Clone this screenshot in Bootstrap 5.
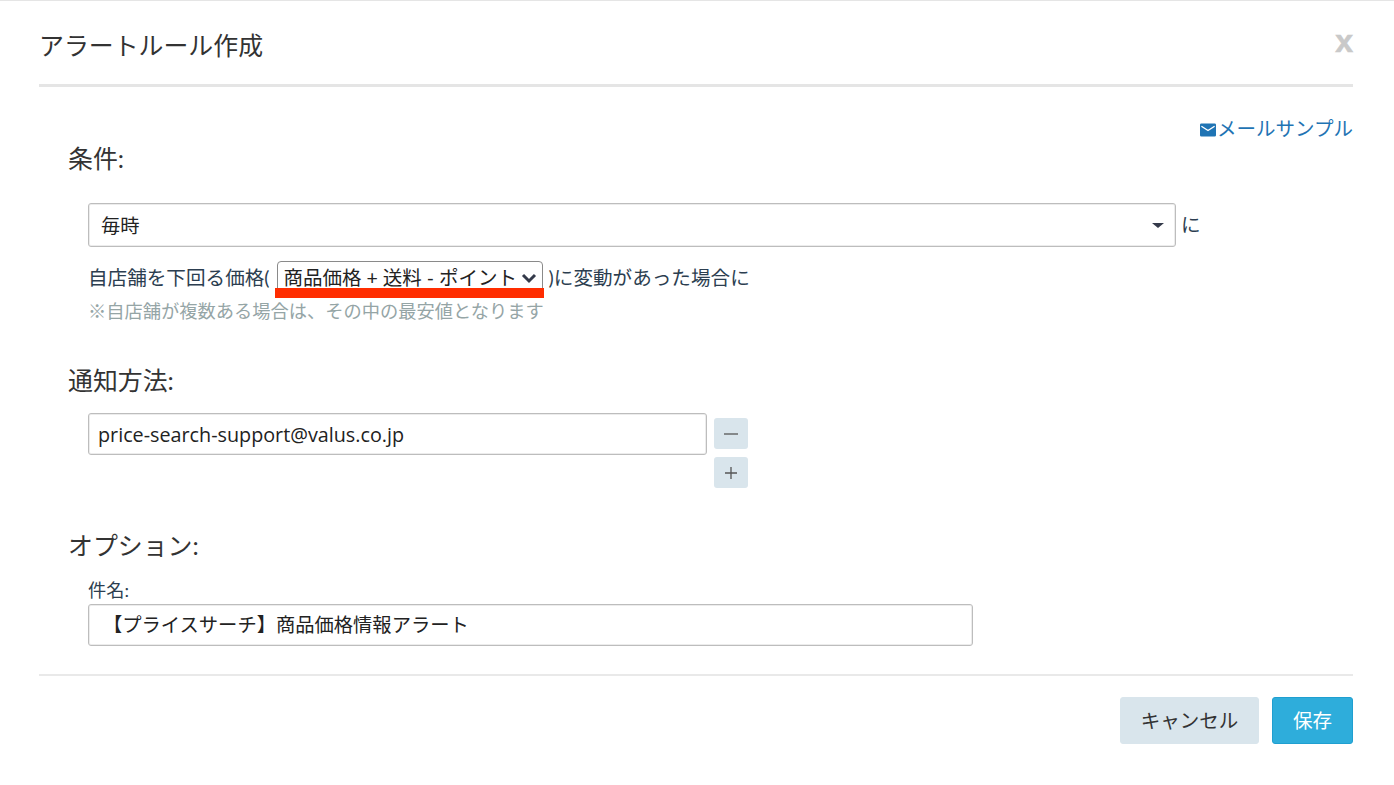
<!DOCTYPE html>
<html lang="ja">
<head>
<meta charset="utf-8">
<title>アラートルール作成</title>
<link href="https://cdn.jsdelivr.net/npm/bootstrap@5.3.0/dist/css/bootstrap.min.css" rel="stylesheet">
<style>
html,body{height:785px;overflow:hidden;background:#fff;}
body{font-family:Lato,"Noto Sans CJK JP",sans-serif;color:#2c3e50;font-size:19.6px;line-height:28px;}
.sheet{border-top:1px solid #e5e5e5;padding:0 41px 0 39px;height:785px;}
.sheet-head{height:86px;border-bottom:3px solid #e5e5e5;}
.sheet-title{font-size:24.9px;font-weight:400;color:#333;margin:0;line-height:32px;padding:28px 0 0 0;}
.close-x{font-family:"Liberation Sans",sans-serif;font-weight:700;font-size:32px;color:#c9c9c9;line-height:32px;margin-top:24px;border:0;background:none;padding:0;-webkit-text-stroke:.6px #c9c9c9;}
.sheet-body{height:587px;padding:28px 0 0 29px;position:relative;}
.sample-link{color:#1f74b4;text-decoration:none;font-size:19.5px;line-height:28px;}
.sample-link svg{width:16px;height:14px;vertical-align:-1px;margin-right:1px;}
.sect-title{font-size:24.9px;font-weight:400;color:#333;line-height:32px;margin:0;}
.title-cond{margin-top:-1px;}
.title-notify{margin-top:40px;}
.title-opts{margin-top:41px;}
.indent{padding-left:20px;}
.cond-row{margin-top:29px;}
.ctl-box{border:1px solid #bdbdbd;border-radius:3px;box-shadow:inset 0 0 0 1px #ececec;color:#222;font-size:19.3px;height:42px;background-color:#fff;}
.every-sel{height:44px;width:1088px;padding:2px 30px 0 12px;line-height:40px;background-position:right 10px center;background-size:14px 14px;background-image:url("data:image/svg+xml,%3csvg xmlns='http://www.w3.org/2000/svg' viewBox='0 0 14 14'%3e%3cpath fill='%23343a4a' d='M1 5h12L7 10z'/%3e%3c/svg%3e");}
.cond-suffix{margin-left:1px;}
.price-row{margin-top:14px;height:32px;line-height:34px;}
.inline-sel{width:266px;height:33px;margin:0 6px 0 7px;padding:1px 24px 0 6px;font-size:19.5px;line-height:30px;color:#222;border:1px solid #8a8a8a;border-radius:4px;background-size:16px 16px;background-position:right 5px center;background-image:url("data:image/svg+xml,%3csvg xmlns='http://www.w3.org/2000/svg' viewBox='0 0 16 16'%3e%3cpath fill='none' stroke='%23343a4a' stroke-width='3' d='M2 5l6 6 6-6'/%3e%3c/svg%3e");}
.red-mark{position:absolute;left:236px;top:201px;width:269px;height:10px;background:#ff2d00;}
.hint{color:#95a5a6;font-size:18.25px;line-height:26px;margin-top:5px;}
.mail-wrap{margin-top:17px;}
.mail-input{width:619px;padding:0 9px;font-family:"Open Sans",sans-serif;font-size:19.75px;}
.step-col{margin-left:7px;padding-top:5px;gap:8px;}
.step-btn{width:34px;height:31px;background:#d9e5ec;border:0;border-radius:3px;padding:0;}
.step-btn svg{width:14px;height:14px;display:block;margin:auto;}
.opt-label{font-size:18.2px;line-height:27px;margin-top:16px;}
.subject{width:885px;padding:0 14px 2px;}
.sheet-foot{border-top:2px solid #e9e9e9;padding-top:21px;gap:13px;}
.btn-cancel{width:139px;height:47px;background:#d9e5ec;border:1px solid #d9e5ec;color:#333;font-size:19.5px;border-radius:3px;}
.btn-save{width:81px;height:47px;background:#2eaddb;border:1px solid #1f9fd0;color:#fff;font-size:19.5px;border-radius:3px;}
</style>
</head>
<body>
<div class="sheet">
  <div class="sheet-head d-flex justify-content-between align-items-start">
    <h1 class="sheet-title">アラートルール作成</h1>
    <button class="close-x" type="button">x</button>
  </div>
  <div class="sheet-body">
    <div class="d-flex justify-content-end">
      <a href="#" class="sample-link"><svg viewBox="0 0 17 14"><path fill="#1f74b4" d="M1.5 0h14A1.5 1.5 0 0 1 17 1.5v11a1.5 1.5 0 0 1-1.5 1.5h-14A1.5 1.5 0 0 1 0 12.500v-11A1.5 1.5 0 0 1 1.500 0z"/><path fill="none" stroke="#fff" stroke-width="1.500" d="M1.500 3l7 4.500 7-4.500"/></svg>メールサンプル</a>
    </div>
    <h2 class="sect-title title-cond">条件:</h2>
    <div class="indent">
      <div class="cond-row d-flex align-items-center gap-1">
        <select class="form-select ctl-box every-sel"><option>毎時</option></select>
        <span class="cond-suffix">に</span>
      </div>
      <div class="price-row d-flex align-items-start">
        <span>自店舗を下回る価格(</span>
        <select class="form-select inline-sel"><option>商品価格 + 送料 - ポイント</option></select>
        <span>)に変動があった場合に</span>
      </div>
      <div class="hint">※自店舗が複数ある場合は、その中の最安値となります</div>
    </div>
    <div class="red-mark"></div>
    <h2 class="sect-title title-notify">通知方法:</h2>
    <div class="indent mail-wrap d-flex align-items-start">
      <input class="form-control ctl-box mail-input" type="text" value="price-search-support@valus.co.jp">
      <div class="step-col d-flex flex-column">
        <button class="step-btn" type="button" aria-label="削除"><svg viewBox="0 0 14 14"><path stroke="#555" stroke-width="1.300" d="M0 7h14"/></svg></button>
        <button class="step-btn" type="button" aria-label="追加"><svg viewBox="0 0 14 14"><path stroke="#555" stroke-width="1.300" fill="none" d="M1 7h12M7 1v12"/></svg></button>
      </div>
    </div>
    <h2 class="sect-title title-opts">オプション:</h2>
    <div class="indent">
      <div class="opt-label">件名:</div>
      <input class="form-control ctl-box subject" type="text" value="【プライスサーチ】商品価格情報アラート">
    </div>
  </div>
  <div class="sheet-foot d-flex justify-content-end">
    <button class="btn btn-cancel p-0" type="button">キャンセル</button>
    <button class="btn btn-save p-0" type="button">保存</button>
  </div>
</div>
<script src="https://cdn.jsdelivr.net/npm/bootstrap@5.3.0/dist/js/bootstrap.bundle.min.js"></script>
</body>
</html>
